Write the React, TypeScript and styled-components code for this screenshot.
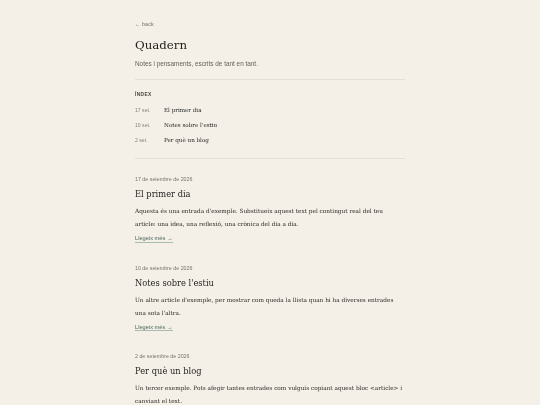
import React from 'react';
import styled, { createGlobalStyle } from 'styled-components';

const GlobalStyle = createGlobalStyle`
  html, body {
    margin: 0;
    padding: 0;
    background: #f4f0e8;
  }
  body {
    font-family: "DejaVu Serif", serif;
    color: #222120;
  }
`;

const Page = styled.main`
  width: 270px;
  margin: 0 auto;
  padding: 21px 0 0;
  will-change: transform;
`;

const Back = styled.a`
  display: block;
  font-family: "Liberation Sans", sans-serif;
  font-size: 5.5px;
  color: #77736c;
  text-decoration: none;
`;

const Title = styled.h1`
  margin: 9px 0 0;
  font-family: "DejaVu Serif", serif;
  font-weight: normal;
  font-size: 11.8px;
  line-height: 18px;
  color: #1f1e1c;
`;

const Subtitle = styled.p`
  margin: 6px 0 0;
  font-family: "Liberation Sans", sans-serif;
  font-size: 6.4px;
  color: #66625c;
`;

const IndexLabel = styled.div`
  margin-top: 12px;
  font-family: "Liberation Sans", sans-serif;
  font-size: 4.8px;
  font-weight: bold;
  letter-spacing: 0.4px;
  color: #45423e;
`;

const IndexList = styled.ul`
  list-style: none;
  margin: 10px 0 0;
  padding: 0;
  display: flex;
  flex-direction: column;
  gap: 4px;
`;

const IndexRow = styled.li`
  display: grid;
  grid-template-columns: 29px 1fr;
  align-items: baseline;
  height: 11px;
`;

const IndexDate = styled.span`
  font-family: "Liberation Sans", sans-serif;
  font-size: 5.1px;
  color: #858078;
`;

const IndexTitle = styled.span`
  font-family: "DejaVu Serif", serif;
  font-size: 5.6px;
  color: #222120;
`;

const Divider = styled.div<{ top: number }>`
  height: 1px;
  background: #e5e0d6;
  margin-top: ${p => p.top}px;
`;

const Posts = styled.div`
  margin-top: 17px;
  display: flex;
  flex-direction: column;
  gap: 22px;
`;

const Post = styled.article`
  display: flex;
  flex-direction: column;
`;

const PostDate = styled.div`
  font-family: "Liberation Sans", sans-serif;
  font-size: 5.3px;
  line-height: 6px;
  color: #78736b;
`;

const PostTitle = styled.h2`
  margin: 6px 0 0;
  font-family: "DejaVu Serif", serif;
  font-weight: normal;
  font-size: 8.3px;
  line-height: 12px;
  color: #1f1e1c;
`;

const PostBody = styled.p`
  margin: 5px 0 0;
  font-family: "DejaVu Serif", serif;
  font-size: 5.78px;
  line-height: 13px;
  color: #2a2826;
`;

const More = styled.a`
  align-self: flex-start;
  margin-top: 4px;
  font-family: "Liberation Sans", sans-serif;
  font-size: 5.7px;
  color: #4a675b;
  text-decoration: none;
  border-bottom: 1px solid #a9bab0;
  line-height: 6.5px;
`;

const posts = [
  {
    date: '17 de setembre de 2026',
    short: '17 set.',
    title: 'El primer dia',
    body: "Aquesta és una entrada d'exemple. Substitueix aquest text pel contingut real del teu article: una idea, una reflexió, una crònica del dia a dia.",
  },
  {
    date: '10 de setembre de 2026',
    short: '10 set.',
    title: "Notes sobre l'estiu",
    body: "Un altre article d'exemple, per mostrar com queda la llista quan hi ha diverses entrades una sota l'altra.",
  },
  {
    date: '2 de setembre de 2026',
    short: '2 set.',
    title: 'Per què un blog',
    body: 'Un tercer exemple. Pots afegir tantes entrades com vulguis copiant aquest bloc <article> i canviant el text.',
  },
];

const App = () => {
  return (
    <>
      <GlobalStyle />
      <Page>
        <Back href="#">← back</Back>
        <Title>Quadern</Title>
        <Subtitle>Notes i pensaments, escrits de tant en tant.</Subtitle>
        <Divider top={12} />
        <IndexLabel>ÍNDEX</IndexLabel>
        <IndexList>
          {posts.map((p, i) => (
            <IndexRow key={i}>
              <IndexDate>{p.short}</IndexDate>
              <IndexTitle>{p.title}</IndexTitle>
            </IndexRow>
          ))}
        </IndexList>
        <Divider top={10} />
        <Posts>
          {posts.map((p, i) => (
            <Post key={i}>
              <PostDate>{p.date}</PostDate>
              <PostTitle>{p.title}</PostTitle>
              <PostBody>{p.body}</PostBody>
              {i < 2 && <More href="#">Llegeix més →</More>}
            </Post>
          ))}
        </Posts>
      </Page>
    </>
  );
};

export default App;
